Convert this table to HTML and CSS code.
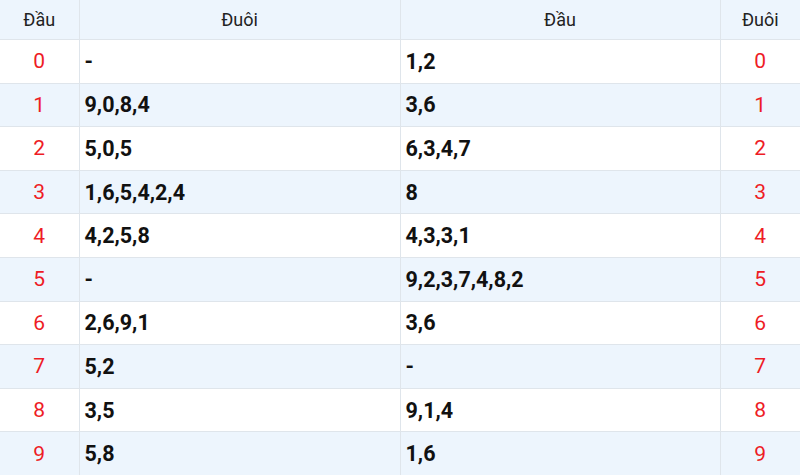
FILE: index.html
```html
<!DOCTYPE html>
<html>
<head>
<meta charset="utf-8">
<link rel="stylesheet" href="styles.css">
</head>
<body>
<table class="lt">
  <colgroup>
    <col class="c-key"><col class="c-val1"><col class="c-val2"><col class="c-key2">
  </colgroup>
  <thead>
    <tr><th>Đầu</th><th>Đuôi</th><th>Đầu</th><th>Đuôi</th></tr>
  </thead>
  <tbody>
    <tr><td class="k">0</td><td class="v">-</td><td class="v">1,2</td><td class="k">0</td></tr>
    <tr><td class="k">1</td><td class="v">9,0,8,4</td><td class="v">3,6</td><td class="k">1</td></tr>
    <tr><td class="k">2</td><td class="v">5,0,5</td><td class="v">6,3,4,7</td><td class="k">2</td></tr>
    <tr><td class="k">3</td><td class="v">1,6,5,4,2,4</td><td class="v">8</td><td class="k">3</td></tr>
    <tr><td class="k">4</td><td class="v">4,2,5,8</td><td class="v">4,3,3,1</td><td class="k">4</td></tr>
    <tr><td class="k">5</td><td class="v">-</td><td class="v">9,2,3,7,4,8,2</td><td class="k">5</td></tr>
    <tr><td class="k">6</td><td class="v">2,6,9,1</td><td class="v">3,6</td><td class="k">6</td></tr>
    <tr><td class="k">7</td><td class="v">5,2</td><td class="v">-</td><td class="k">7</td></tr>
    <tr><td class="k">8</td><td class="v">3,5</td><td class="v">9,1,4</td><td class="k">8</td></tr>
    <tr><td class="k">9</td><td class="v">5,8</td><td class="v">1,6</td><td class="k">9</td></tr>
  </tbody>
</table>
</body>
</html>
```
FILE: styles.css
```css
html, body {
  margin: 0;
  padding: 0;
  background: #fff;
  font-family: Roboto, "Liberation Sans", sans-serif;
  overflow: hidden;
}
.lt {
  width: 800px;
  border-collapse: collapse;
  table-layout: fixed;
}
.c-key { width: 79px; }
.c-val1 { width: 321px; }
.c-val2 { width: 320px; }
.c-key2 { width: 80px; }
.lt th, .lt td {
  border: 1px solid #dfe5eb;
  padding: 0;
}
.lt tr > :first-child { border-left: none; }
.lt tr > :last-child { border-right: none; }
.lt thead th { border-top: none; }
.lt th {
  height: 39px;
  background: #edf5fd;
  font-weight: 400;
  font-size: 18px;
  color: #222;
  text-align: center;
  vertical-align: middle;
}
.lt td {
  height: 42.6px;
  vertical-align: middle;
}
.lt tbody tr:nth-child(even) td { background: #edf5fd; }
.lt td.k {
  text-align: center;
  color: #ee1c25;
  font-size: 21px;
}
.lt td.v {
  text-align: left;
  padding-left: 5px;
  font-weight: 700;
  font-size: 21.5px;
  color: #111;
}
```
